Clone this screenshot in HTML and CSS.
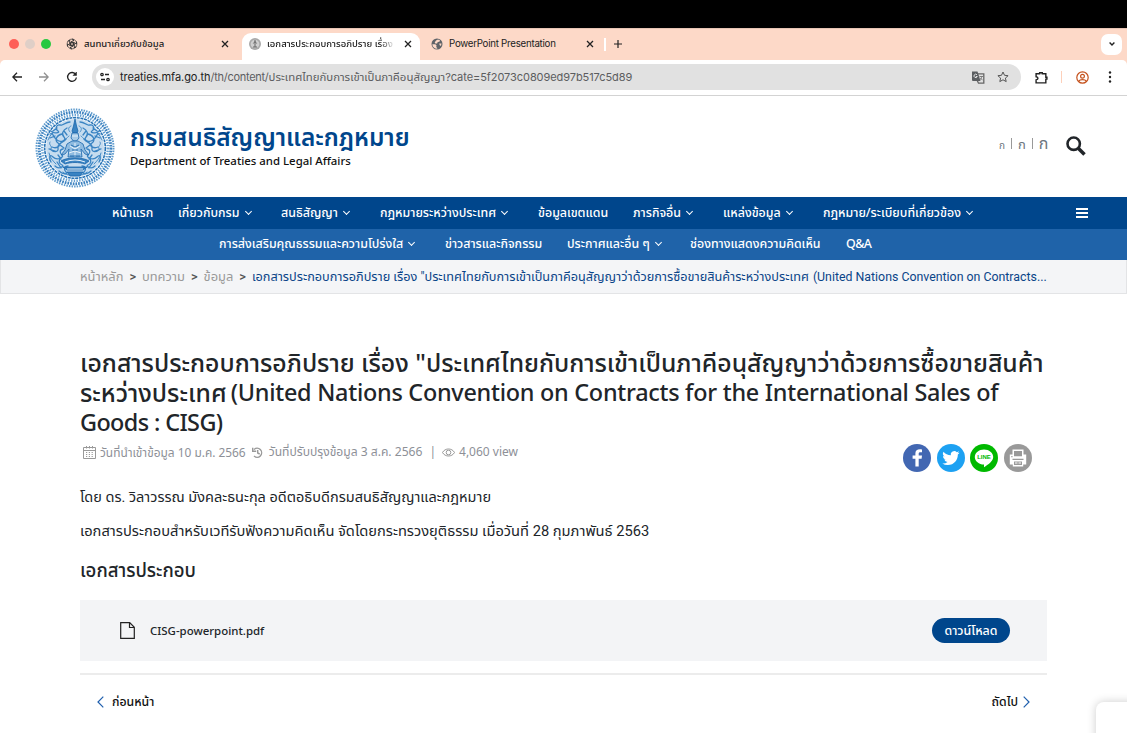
FILE: index.html
```html
<!DOCTYPE html>
<html lang="th">
<head>
<meta charset="utf-8">
<title>กรมสนธิสัญญาและกฎหมาย</title>
<link rel="stylesheet" href="styles.css">
</head>
<body>
<div class="screen">
  <div class="menubar"></div>
  <div class="tabstrip">
    <div class="lights"><i class="red"></i><i class="grey"></i><i class="green"></i></div>
    <div class="tab tab-one">
      <svg class="fav" viewBox="0 0 24 24" fill="none" stroke="#333" stroke-width="1.9"><g id="knot"><path d="M12 2.200a4.600 4.600 0 0 1 4 2.200l-6.600 3.800v7.600"/></g><use href="#knot" transform="rotate(60 12 12)"/><use href="#knot" transform="rotate(120 12 12)"/><use href="#knot" transform="rotate(180 12 12)"/><use href="#knot" transform="rotate(240 12 12)"/><use href="#knot" transform="rotate(300 12 12)"/><circle cx="12" cy="12" r="9.800" stroke-width="1.400"/></svg>
      <span class="tab-title">สนทนาเกี่ยวกับข้อมูล</span>
      <svg class="close" viewBox="0 0 8 8"><path d="M1 1l6 6M7 1L1 7"/></svg>
    </div>
    <div class="tab tab-two">
      <svg class="fav" viewBox="0 0 12 12"><circle cx="6" cy="6" r="6" fill="#a9a9a9"/><circle cx="6" cy="6" r="4.300" fill="#cfcfcf"/><path d="M6 2v7M4 9h4M4.400 5.500L6 3.500l1.600 2" stroke="#666" fill="none"/></svg>
      <span class="tab-title">เอกสารประกอบการอภิปราย เรื่อง</span>
      <svg class="close" viewBox="0 0 8 8"><path d="M1 1l6 6M7 1L1 7"/></svg>
    </div>
    <div class="tab tab-three">
      <svg class="fav" viewBox="0 0 12 12"><circle cx="6" cy="6" r="5.500" fill="#5f6368"/><path d="M1.300 6.200l3 .1 1.300 1.200-.4 1.600 1 .8v.9C3.500 10.800 1.500 9 1.300 6.200zM5 2.500l2-1 2.200 1-.9 1.300-1.600.3-.6 1.500H4.300L3.700 4.400zM8.200 5.500l2.300.1-.5 2.400-1.300-.7z" fill="#fdd9c8"/></svg>
      <span class="tab-title">PowerPoint Presentation</span>
      <svg class="close" viewBox="0 0 8 8"><path d="M1 1l6 6M7 1L1 7"/></svg>
    </div>
    <i class="tab-sep"></i>
    <svg class="plus" viewBox="0 0 8 8"><path d="M4 0v8M0 4h8"/></svg>
    <div class="tabmenu"><svg viewBox="0 0 6 4"><path d="M.6.6L3 3 5.400.6"/></svg></div>
  </div>
  <div class="toolbar-wrap"><div class="toolbar">
    <svg class="back" viewBox="0 0 10 10"><path d="M10 5H1M5 .8L.8 5 5 9.200"/></svg>
    <svg class="fwd" viewBox="0 0 10 10"><path d="M0 5h9M5 .8L9.200 5 5 9.200"/></svg>
    <svg class="reload" viewBox="0 0 12 12"><path d="M9.800 3.600A4.400 4.400 0 1 0 10.400 6.500"/><path d="M10.500 1v3.500H7z" fill="#222" stroke-width=".5"/></svg>
    <div class="omnibox">
      <div class="site"><svg viewBox="0 0 10 10"><circle cx="2" cy="2.500" r="1.200"/><path d="M5 2.500h4M1 7.500h4"/><circle cx="8" cy="7.500" r="1.200"/></svg></div>
      <div class="url"><b>treaties.mfa.go.th</b><span class="url-path">/th/content/</span><span class="url-th">ประเทศไทยกับการเข้าเป็นภาคีอนุสัญญา</span><span class="url-q">?cate=5f2073c0809ed97b517c5d89</span></div>
      <svg class="translate" viewBox="0 0 13 13"><path d="M5 2.800h6.800v9.400H6.500L5 9z" fill="none" stroke="#666"/><path d="M0 .5h5.500L8.500 10H1a1 1 0 0 1-1-1z" fill="#5b5e61"/><path d="M5 3.800A1.700 1.700 0 1 0 5.300 5.500H3.800" fill="none" stroke="#fff" stroke-width=".8"/><path d="M7.500 5.500h3.500M9.800 5.500C9.500 7 8.500 8.500 7.800 9M8.500 7l2 2.200" fill="none" stroke="#666" stroke-width=".8"/></svg>
      <svg class="star" viewBox="0 0 12 12"><path d="M6 1l1.500 3.300 3.600.4-2.700 2.400.8 3.500L6 8.800l-3.200 1.800.8-3.500L.9 4.700l3.600-.4z"/></svg>
    </div>
    <svg class="puzzle" viewBox="0 0 12 12"><path d="M1 2.500h3.300V1.600h2.400v.9H10v3.200h1v1.800h-1V11H1V8.200c2.300-.3 2.300-2.600 0-2.900z"/></svg>
    <i class="tool-sep"></i>
    <svg class="avatar" viewBox="0 0 13 13"><circle cx="6.500" cy="6.500" r="5.700"/><circle cx="6.500" cy="5.200" r="1.900"/><path d="M2.500 10.300c1.700-2.300 6.300-2.300 8 0"/></svg>
    <svg class="dots" viewBox="0 0 4 12"><circle cx="2" cy="1.500" r="1.200"/><circle cx="2" cy="6" r="1.200"/><circle cx="2" cy="10.500" r="1.200"/></svg>
  </div></div>

  <header class="head">
    <svg class="emblem" viewBox="-40 -40 80 80">
      <g fill="none" stroke="#2672b5">
        <circle r="38.500" stroke-width="2" stroke-dasharray="1.500 1.100" stroke="#5e9bcd"/>
        <circle r="35.800" stroke-width="2.800" stroke-dasharray="1.700 1" stroke="#3c82c0"/>
        <circle r="32.800" stroke-width="2.500" stroke-dasharray="1.400 1.300" stroke="#68a2d2"/>
        <circle r="30.300" stroke-width="1.600" stroke-dasharray="3 .7"/>
      </g>
      <circle r="29" fill="#c6dcef"/>
      <g id="half" fill="none" stroke="#3a84c3" stroke-width="1.300" stroke-linecap="round">
        <path d="M5-26c5 0 6 4 10 3s5 4 2 6 5 3 7 0M8-20c4 2 6 6 3 9s3 6 7 3 4-8 7-6M13-14c5 1 8 6 4 9s2 6 6 4M9-9c3 4 9 4 8 9s5 4 8 1M12 1c3 0 4 4 1 6s5 6 9 2 4 2 2 5M14 10c3 2 2 6-1 7s3 5 7 1M7 18c3 0 5 3 2 6s4 2 7-1M9-25l4 2M18-20l4 3M11-17l-3 4M20-12l5 2M15-3l-4 3M20 3l6-2M17 7l-3 4M18 14l-4 6"/>
        <path d="M4-22c3 1 3 4 1 6M6-12c3 2 4 6 8 6M25-6c2 3-3 4-1 7M22-15c3 2 4 5 5 7M26 5c-1 5-4 8-7 11M12 24c-2 2-4 3-7 3" stroke-width=".9"/>
      </g>
      <use href="#half" transform="scale(-1 1)"/>
      <g fill="#3a83c2" stroke="#1b66ab" stroke-width=".8">
        <path d="M0-29l1.500 7 1.500 5-1 2h-4l-1-2 1.500-5z"/>
        <path d="M-3-15h6l1 5-2.500 3h-3l-2.500-3z" fill="#a9cbe7"/>
        <path d="M-3-7h6l5 3 2 6 4 5-4-1-4-5 1 8h-14l1-8-4 5-4 1 4-5 2-6z" fill="#8fbbe0"/>
        <path d="M-14 13c5-4 23-4 28 0l-4 3c-6-2-14-2-20 0zM-12 19h24l-4 3H-8zM-8 24H8l-3 4H-5z"/>
      </g>
      <path d="M-3-12h6M0-5V9M-5-2l5 3 5-3M-6 5l6-2 6 2M-10 14q10-4 20 0M-8 21H8" fill="none" stroke="#e6f1fa" stroke-width="1"/>
      <path d="M-4-3l4 2 4-2M-3 2h6M-5 8h10" fill="none" stroke="#1b66ab" stroke-width=".9"/>
    </svg>
    <div class="brand"><div class="brand-th">กรมสนธิสัญญาและกฎหมาย</div><div class="brand-en">Department of Treaties and Legal Affairs</div></div>
    <div class="sizes"><span class="s1">ก</span><i></i><span class="s2">ก</span><i></i><span class="s3">ก</span></div>
    <svg class="search" viewBox="0 0 20 20"><circle cx="7.700" cy="7.700" r="6.200" stroke-width="2.600"/><path d="M12.500 12.500l6 6" stroke-width="3.600"/></svg>
  </header>

  <nav class="nav nav-a">
    <a>หน้าแรก</a><a class="d">เกี่ยวกับกรม</a><a class="d">สนธิสัญญา</a><a class="d">กฎหมายระหว่างประเทศ</a><a>ข้อมูลเขตแดน</a><a class="d">ภารกิจอื่น</a><a class="d">แหล่งข้อมูล</a><a class="d">กฎหมาย/ระเบียบที่เกี่ยวข้อง</a>
    <svg class="burger" viewBox="0 0 12 10"><path d="M0 1h12M0 5h12M0 9h12"/></svg>
  </nav>
  <nav class="nav nav-b">
    <a class="d">การส่งเสริมคุณธรรมและความโปร่งใส</a><a>ข่าวสารและกิจกรรม</a><a class="d">ประกาศและอื่น ๆ</a><a>ช่องทางแสดงความคิดเห็น</a><a class="qa">Q&amp;A</a>
  </nav>
  <div class="crumbs">
    <span class="c">หน้าหลัก</span><b>&gt;</b><span class="c">บทความ</span><b>&gt;</b><span class="c">ข้อมูล</span><b>&gt;</b><span class="now"><span>เอกสารประกอบการอภิปราย เรื่อง "ประเทศไทยกับการเข้าเป็นภาคีอนุสัญญาว่าด้วยการซื้อขายสินค้าระหว่างประเทศ</span><span class="now-en">(United Nations Convention on Contracts...</span></span>
  </div>

  <main class="content">
    <h1><span class="l1">เอกสารประกอบการอภิปราย เรื่อง "ประเทศไทยกับการเข้าเป็นภาคีอนุสัญญาว่าด้วยการซื้อขายสินค้า</span><span class="l2"><span>ระหว่างประเทศ</span><span class="l2-en">(United Nations Convention on Contracts for the International Sales of</span></span><span class="l3">Goods : CISG)</span></h1>
    <div class="meta">
      <svg class="cal" viewBox="0 0 13 13"><path d="M.5 1.500h12v11H.5zM.5 4.500h12M3.500 0v2.500M6.500 0v2.500M9.500 0v2.500"/><path d="M3 6.500h7.500M3 8.500h7.500M3 10.500h7.500" stroke-dasharray="1.200 1.600" stroke-width="1.200"/></svg>
      <span class="m1">วันที่นำเข้าข้อมูล 10 ม.ค. 2566</span>
      <svg class="hist" viewBox="0 0 11 11"><path d="M2 2.500A4.500 4.500 0 1 1 2 9M.7.800v3.400h3.500M5.700 3v3l2 1"/></svg>
      <span class="m2">วันที่ปรับปรุงข้อมูล 3 ส.ค. 2566</span>
      <span class="bar">|</span>
      <svg class="eye" viewBox="0 0 13 9"><path d="M.5 4.500C3-.2 10-.2 12.500 4.500 10 9.200 3 9.200.5 4.500z"/><circle cx="6.500" cy="4.500" r="2.300"/></svg>
      <span class="m3">4,060 view</span>
    </div>
    <div class="share">
      <svg viewBox="0 0 28 28"><circle cx="14" cy="14" r="14" fill="#4267b2"/><path d="M15.700 22.500v-7.700h2.900l.4-3.300h-3.300V9.700c0-1 .4-1.500 1.600-1.500H19V5.400c-4.100-.6-6.600.5-6.600 3.900v2.200H9.600v3.300h2.800v7.700z" fill="#fff"/></svg>
      <svg viewBox="0 0 28 28"><circle cx="14" cy="14" r="14" fill="#1da1f2"/><path transform="translate(5.300 5.400) scale(.72)" d="M23.950 4.570a10 10 0 0 1-2.820.770 4.960 4.960 0 0 0 2.160-2.720c-.95.560-2 .96-3.120 1.180a4.920 4.920 0 0 0-8.380 4.480C7.690 8.090 4.070 6.130 1.640 3.160a4.920 4.920 0 0 0 1.520 6.570 4.900 4.900 0 0 1-2.230-.61v.06a4.920 4.920 0 0 0 3.950 4.830 5 5 0 0 1-2.210.08 4.940 4.940 0 0 0 4.600 3.420A9.870 9.870 0 0 1 0 19.540a14 14 0 0 0 7.550 2.210c9.050 0 14-7.500 14-13.980v-.64a9.940 9.940 0 0 0 2.400-2.560z" fill="#fff"/></svg>
      <svg viewBox="0 0 28 28"><circle cx="14" cy="14" r="14" fill="#00b900"/><path d="M14 5.500c5 0 9.200 3.300 9.200 7.500 0 4-5 7.600-9.200 10.300v-2.700c-5-.1-9.200-3.300-9.200-7.600 0-4.200 4.200-7.500 9.200-7.500z" fill="#fff"/><text x="14" y="15.300" class="line">LINE</text></svg>
      <svg viewBox="0 0 28 28"><circle cx="14" cy="14" r="14" fill="#999"/><path d="M8.500 5.500h11v5h2.700v10h-3v2H8.800v-2h-3v-10h2.700z" fill="#fff"/><path d="M10 7h8v5.300h-8zM7.300 12h1.200v1.200H7.300zM8.500 14.700h11V16h-11zM10 17.500h8v3.500h-8z" fill="#999"/><path d="M11 19h2.500M14.500 19H17" stroke="#fff"/></svg>
    </div>
    <p class="p1">โดย ดร. วิลาวรรณ มังคละธนะกุล อดีตอธิบดีกรมสนธิสัญญาและกฎหมาย</p>
    <p class="p2">เอกสารประกอบสำหรับเวทีรับฟังความคิดเห็น จัดโดยกระทรวงยุติธรรม เมื่อวันที่ 28 กุมภาพันธ์ 2563</p>
    <h2>เอกสารประกอบ</h2>
    <div class="file">
      <svg viewBox="0 0 15 17"><path d="M.7.700h9l4.600 4.600v11H.7zM9.500.7v4.800h4.800"/></svg>
      <span class="fname">CISG-powerpoint.pdf</span>
      <a class="dl">ดาวน์โหลด</a>
    </div>
    <div class="pager">
      <svg viewBox="0 0 7 12"><path d="M6.300.7L1 6l5.300 5.300"/></svg><span class="prev">ก่อนหน้า</span>
      <span class="next">ถัดไป</span><svg viewBox="0 0 7 12"><path d="M.7.700L6 6 .7 11.300"/></svg>
    </div>
  </main>
  <div class="chat"></div>
</div>
</body>
</html>
```
FILE: styles.css
```css
* { box-sizing: border-box; }
body { margin: 0; background: #fff; color: #212529; font-family: "Noto Sans", "Noto Sans Thai", sans-serif; overflow: hidden; }
svg { display: block; flex: none; fill: none; }
.screen { position: relative; width: 1127px; height: 733px; overflow: hidden; }
.menubar { height: 28px; background: #000; }

.tabstrip { height: 32px; background: #fdd9c8; display: flex; align-items: center; font: 500 9.5px/16px Inter, "Noto Sans Thai", sans-serif; color: #222; border-top: 1px solid #e6c4b4; padding-bottom: 1px; }
.lights { display: flex; gap: 6px; width: 57px; padding-left: 9px; }
.lights i { width: 10px; height: 10px; border-radius: 50%; flex: none; }
.red { background: #fe5f57; }
.grey { background: #dfcfc7; }
.green { background: #28c840; }
.tab { display: flex; align-items: center; height: 30px; white-space: nowrap; }
.fav { width: 12px; height: 12px; margin-right: 6px; }
.tab-title { flex: 1; }
.close { width: 8px; height: 8px; stroke: #222; stroke-width: 1.3; }
.tab-one { width: 185px; padding: 0 13px 0 9px; }
.tab-two { width: 178px; height: 27px; margin-top: 5px; padding: 0 8px 6px 7px; background: #fff; border-radius: 9px 9px 0 0; }
.tab-two .tab-title { flex: 0 0 128px; margin-right: 9px; -webkit-mask-image: linear-gradient(90deg, #000 88%, transparent); mask-image: linear-gradient(90deg, #000 88%, transparent); }
.tab-three { width: 184px; padding: 0 10px 0 11px; }
.tab-three .tab-title { font-weight: 400; letter-spacing: -.25px; font-size: 9.7px; }
.tab-sep { width: 2px; height: 13px; background: #fff; }
.plus { width: 8px; height: 8px; margin-left: 8px; stroke: #222; stroke-width: 1.2; }
.tabmenu { width: 21px; height: 21px; margin: 0 5px 0 auto; border-radius: 7px; background: #fff; display: flex; align-items: center; justify-content: center; }
.tabmenu svg { width: 6px; height: 4px; stroke: #222; stroke-width: 1.4; }

.toolbar-wrap { background: #fdd9c8; }
.toolbar { height: 36px; background: #fff; border-bottom: 1px solid #d3d3d3; border-radius: 5px 5px 0 0; display: flex; align-items: center; padding: 0 0 1px 12px; }
.toolbar svg { stroke: #222; stroke-width: 1.3; }
.back, .fwd { width: 10px; height: 10px; }
.fwd { margin-left: 17px; opacity: .5; }
.reload { width: 12px; height: 12px; margin-left: 17px; }
.omnibox { width: 929px; height: 26px; margin-left: 14px; border-radius: 13px; background: #e1e1e1; display: flex; align-items: center; padding-left: 4px; }
.site { width: 18px; height: 18px; border-radius: 50%; background: #fff; display: flex; align-items: center; justify-content: center; }
.site svg { width: 10px; height: 10px; }
.url { flex: 1; margin-left: 6px; display: flex; white-space: nowrap; font: 400 11px/18px Inter, "Noto Sans Thai", sans-serif; color: #5c5d5f; }
.url b { font-weight: 400; color: #222; letter-spacing: -.05px; }
.url-path { letter-spacing: -.28px; }
.url-th { font-size: 11.4px; }
.url-q { letter-spacing: -.07px; }
.toolbar .translate { width: 13px; height: 13px; margin-right: 12px; stroke: none; }
.toolbar .star { width: 12px; height: 12px; margin-right: 12px; stroke: #555; stroke-width: 1; }
.puzzle { width: 13px; height: 13px; margin-left: 14px; }
.tool-sep { width: 1px; height: 12px; margin-left: 13px; background: #fdd0ba; }
.toolbar .avatar { width: 13px; height: 13px; margin-left: 14px; stroke: #c5521d; stroke-width: 1.2; }
.toolbar .dots { width: 4px; height: 12px; margin-left: 19px; fill: #222; stroke: none; }

.head { height: 101px; display: flex; align-items: flex-start; padding-left: 35px; }
.emblem { width: 80px; height: 80px; margin-top: 12px; }
.brand { width: 884px; padding: 24px 0 0 15px; white-space: nowrap; }
.brand-th { font-size: 24.4px; line-height: 34px; font-weight: 600; color: #00468c; }
.brand-en { font-size: 11.4px; line-height: 14px; font-weight: 500; color: #111; }
.sizes { display: flex; align-items: baseline; gap: 6px; height: 18px; margin-top: 38px; color: #6c757d; width: 67px; }
.sizes span { line-height: 18px; }
.sizes i { width: 1px; height: 11px; background: #999; }
.s1 { font-size: 10px; }
.s2 { font-size: 13px; }
.s3 { font-size: 16px; }
.search { width: 20px; height: 20px; margin-top: 40px; stroke: #212529; }

.nav { display: grid; align-items: center; color: #fff; font-size: 12.4px; font-weight: 500; line-height: 20px; white-space: nowrap; }
.nav a { display: flex; align-items: center; }
.nav .d::after { content: ""; width: 4px; height: 4px; margin: -3px 0 0 6px; border: solid #fff; border-width: 0 1px 1px 0; transform: rotate(45deg); }
.nav-a { height: 32px; background: #00468c; padding-left: 112px; grid-template-columns: 66px 103px 99px 158px 95px 90px 100px 253px 12px; }
.nav-b { height: 31px; background: #1f63a9; padding: 0 0 2px 219px; grid-template-columns: 226px 122px 123px 156px 30px; }
.qa { letter-spacing: -.5px; }
.burger { width: 12px; height: 10px; stroke: #fff; stroke-width: 2; }
.crumbs { height: 34px; background: #f4f5f7; border: 1px solid #e3e4e6; border-top: 0; display: flex; align-items: center; padding-left: 79px; font: 400 12.7px/20px Roboto, "Noto Sans Thai", sans-serif; color: #999; white-space: nowrap; }
.c { font-size: 12.9px; }
.crumbs b { font-weight: 500; color: #555; width: 18.6px; text-align: center; }
.now { color: #0a4488; display: flex; gap: 4px; }
.now-en { font-size: 12.35px; }

.content { padding: 53px 80px 0; position: relative; }
h1 { margin: 0; font-size: 24.8px; line-height: 30px; font-weight: 500; white-space: nowrap; }
.l1, .l3 { display: block; }
.l2 { display: flex; gap: 4px; }
.l2-en { font-size: 23.4px; letter-spacing: -.26px; }
.l3 { font-size: 23.4px; letter-spacing: -.6px; }
.meta { height: 30px; display: flex; align-items: center; padding-left: 3px; color: #8d9097; font-size: 12px; line-height: 20px; white-space: nowrap; }
.meta svg { stroke: #999; stroke-width: 1; }
.cal { width: 13px; height: 13px; margin-right: 4px; }
.m1 { font-size: 11.9px; }
.hist { width: 11px; height: 11px; margin: 0 6px 0 6px; }
.meta .hist { stroke-width: 1.4; }
.m2 { font-size: 12.1px; }
.bar { margin: 0 6px 0 7px; }
.eye { width: 13px; height: 9px; margin-right: 4px; }
.m3 { font-size: 12px; }
.share { display: flex; gap: 5.7px; justify-content: flex-end; padding-right: 15px; margin-top: -23px; }
.share svg { width: 28px; height: 28px; }
.line { font: 700 6px "Liberation Sans", sans-serif; fill: #00b900; text-anchor: middle; }
p { margin: 0; font: 400 14.53px/20px Roboto, "Noto Sans Thai", sans-serif; white-space: nowrap; }
.p1 { margin-top: 16px; }
.p2 { margin-top: 13px; font-size: 14.68px; }
h2 { margin: 16px 0 0; font-size: 18.6px; line-height: 25px; font-weight: 500; white-space: nowrap; }
.file { height: 61px; margin-top: 18px; background: #f3f4f6; display: flex; align-items: center; padding: 0 37px 0 40px; }
.file svg { width: 15px; height: 17px; stroke: #222; stroke-width: 1.2; }
.fname { margin-left: 15px; flex: 1; font-size: 11.45px; font-weight: 500; }
.dl { width: 78px; height: 25px; border-radius: 13px; background: #00468c; color: #fff; font-size: 12.4px; line-height: 25px; font-weight: 500; text-align: center; white-space: nowrap; }
.pager { margin-top: 12px; border-top: 2px solid #ececec; height: 56px; display: flex; align-items: center; padding: 0 17px; font-size: 12.3px; font-weight: 500; color: #111; }
.pager svg { width: 7px; height: 12px; stroke: #1f5fae; stroke-width: 1.2; }
.prev { margin-left: 8px; flex: 1; }
.next { margin-right: 5px; }
.chat { position: absolute; left: 1096px; top: 702px; width: 60px; height: 60px; border-radius: 8px; background: #fff; box-shadow: 0 0 10px rgba(0,0,0,.2); }
```
